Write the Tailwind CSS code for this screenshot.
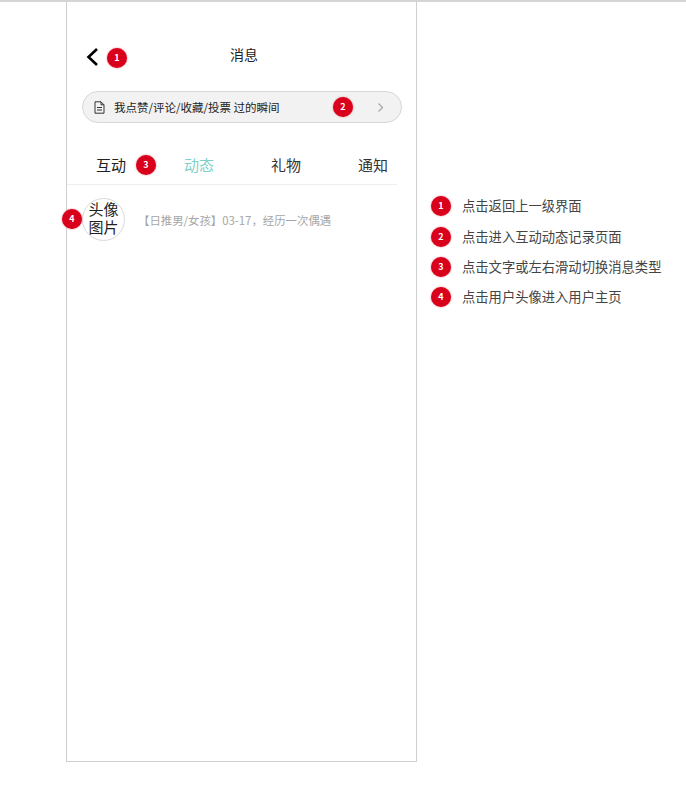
<!DOCTYPE html>
<html lang="zh-CN">
<head>
  <meta charset="UTF-8" />
  <title>消息</title>
  <script src="https://cdn.jsdelivr.net/npm/@tailwindcss/browser@4"></script>
</head>
<body class="bg-white font-['Noto_Sans_CJK_SC','Liberation_Sans',sans-serif]">
  <div class="h-[785px] w-[686px] overflow-hidden border-t-2 border-[#d4d4d4] flex">

    <!-- Phone frame -->
    <div class="relative ml-[66px] w-[351px] h-[760px] border border-t-0 border-[#cfcfcf] shrink-0">
      <!-- Header -->
      <div class="relative h-[89px] pt-[41px]">
        <div class="flex items-center pl-[18px] gap-[8px] h-[28px]">
          <svg width="14" height="20" viewBox="0 0 14 20" fill="none" stroke="#000" stroke-width="2.6"><path d="M12 2 L3.5 10 L12 18"/></svg>
          <span class="mt-[2px] w-5 h-5 rounded-full bg-[#d9001b] shadow-[0_0_2px_#d9001b88] text-white text-[9px] font-bold flex items-center justify-center">1</span>
        </div>
        <div class="absolute left-[163px] top-[41px] text-[14px] leading-[22px] text-[#222]">消息</div>
      </div>

      <!-- Record entry -->
      <div class="ml-[15px] w-[320px] h-[32px] rounded-full bg-[#f2f2f2] border border-[#d7d7d7] flex items-center pl-[11px]">
        <svg width="11" height="13" viewBox="0 0 11 13" fill="none" stroke="#333" stroke-width="1"><path d="M1 .8h6l3 3v8.4H1zM7 .8v3h3M3 6.5h5M3 9h5"/></svg>
        <span class="ml-[9px] w-[219px] text-[11.5px] leading-[16px] text-[#222] whitespace-nowrap">我点赞/评论/收藏/投票 过的瞬间</span>
        <span class="w-5 h-5 rounded-full bg-[#d9001b] shadow-[0_0_2px_#d9001b88] text-white text-[9px] font-bold flex items-center justify-center">2</span>
        <svg class="ml-[24px]" width="7" height="11" viewBox="0 0 7 11" fill="none" stroke="#aaa" stroke-width="1.3"><path d="M1.5 1.5 L5.5 5.5 L1.5 9.5"/></svg>
      </div>

      <!-- Tabs -->
      <div class="relative mt-[27px] w-[330px] h-[35px] border-b border-[#eeeeee] flex text-[15px] leading-[30px]">
        <div class="absolute left-[29px] top-0 text-[#222]">互动</div>
        <span class="absolute left-[69px] top-[5px] w-5 h-5 rounded-full bg-[#d9001b] shadow-[0_0_2px_#d9001b88] text-white text-[9px] font-bold flex items-center justify-center">3</span>
        <div class="absolute left-[117px] top-0 text-[#7fd1c7]">动态</div>
        <div class="absolute left-[204px] top-0 text-[#333]">礼物</div>
        <div class="absolute left-[291px] top-0 text-[#333]">通知</div>
      </div>

      <!-- Message row -->
      <div class="relative mt-[13px] flex items-center pl-[15px]">
        <span class="absolute left-[-5px] top-[11px] w-5 h-5 rounded-full bg-[#d9001b] shadow-[0_0_2px_#d9001b88] text-white text-[9px] font-bold flex items-center justify-center">4</span>
        <div class="w-[43px] h-[43px] pb-[3px] rounded-full border border-[#d9d9d9] flex items-center justify-center text-center text-[15px] leading-[18px] text-[#222]">头像<br />图片</div>
        <div class="ml-[13px] text-[11.4px] leading-[16px] text-[#a6a6a6] whitespace-nowrap">【日推男/女孩】03-17，经历一次偶遇</div>
      </div>
    </div>

    <!-- Notes -->
    <div class="ml-[14px] pt-[194px] flex flex-col gap-[10px]">
      <div class="flex items-center gap-[11px] h-[20px] mb-px"><span class="w-5 h-5 rounded-full bg-[#d9001b] shadow-[0_0_2px_#d9001b88] text-white text-[9px] font-bold flex items-center justify-center">1</span><span class="text-[13.3px] text-[#444] whitespace-nowrap">点击返回上一级界面</span></div>
      <div class="flex items-center gap-[11px] h-[20px]"><span class="w-5 h-5 rounded-full bg-[#d9001b] shadow-[0_0_2px_#d9001b88] text-white text-[9px] font-bold flex items-center justify-center">2</span><span class="text-[13.3px] text-[#444] whitespace-nowrap">点击进入互动动态记录页面</span></div>
      <div class="flex items-center gap-[11px] h-[20px]"><span class="w-5 h-5 rounded-full bg-[#d9001b] shadow-[0_0_2px_#d9001b88] text-white text-[9px] font-bold flex items-center justify-center">3</span><span class="text-[13.3px] text-[#444] whitespace-nowrap">点击文字或左右滑动切换消息类型</span></div>
      <div class="flex items-center gap-[11px] h-[20px]"><span class="w-5 h-5 rounded-full bg-[#d9001b] shadow-[0_0_2px_#d9001b88] text-white text-[9px] font-bold flex items-center justify-center">4</span><span class="text-[13.3px] text-[#444] whitespace-nowrap">点击用户头像进入用户主页</span></div>
    </div>
  </div>
</body>
</html>
